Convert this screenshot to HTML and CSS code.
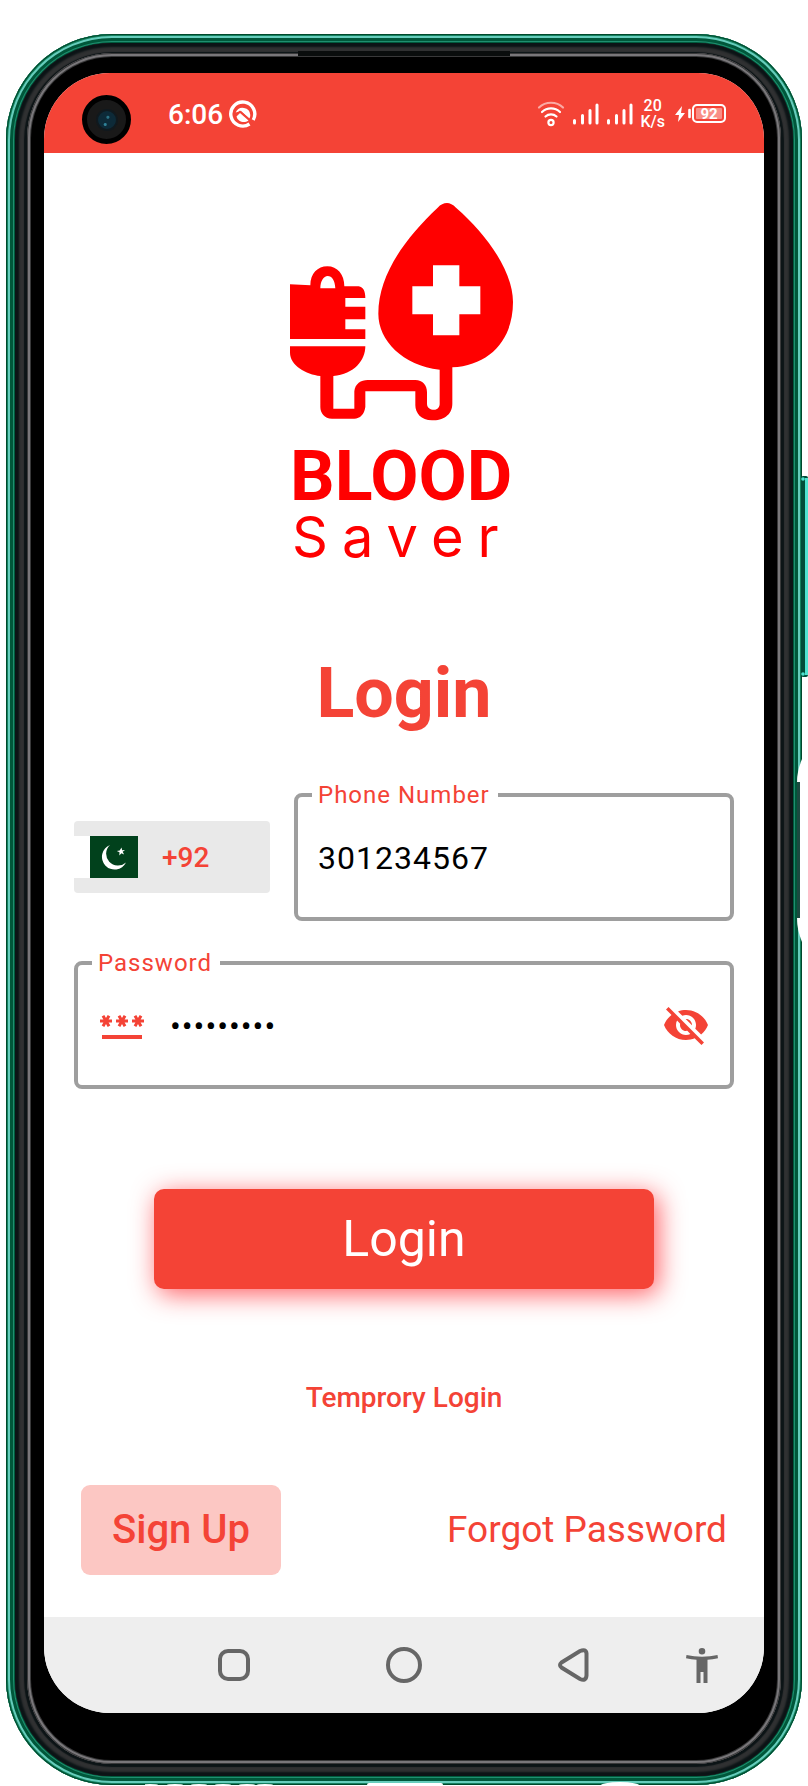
FILE: index.html
```html
<!DOCTYPE html>
<html lang="en">
<head>
<meta charset="utf-8">
<meta name="viewport" content="width=device-width, initial-scale=1">
<title>Blood Saver - Login</title>
<link rel="stylesheet" href="styles.css">
</head>
<body>
<div class="stage">
  <div class="phone">
    <div class="rim">
      <div class="edge">
        <div class="glass">
          <div class="screen">
            <header class="status">
              <span class="camera"><span class="lens"></span></span>
              <div class="status-left">
                <span class="clock">6:06</span>
                <svg class="app-icon" viewBox="0 0 28 28" aria-hidden="true">
                  <path d="M24.200 20A12 12 0 1 0 20.500 24" fill="none" stroke="#fff" stroke-width="3.400"/>
                  <path d="M6.700 12.500a7.600 7.600 0 0 1 14.600 2.500q0 2-1 3.500L12 11z" fill="#fff"/>
                  <path d="M7.500 16.500l3.500-3.500 8.500 7.500a7.600 7.600 0 0 1-12-4z" fill="#fff"/>
                  <path d="M6 16l5-4.500 10 8.500" fill="none" stroke="#f44336" stroke-width="1.600"/>
                </svg>
              </div>
              <div class="status-right">
                <svg class="wifi" viewBox="0 0 28 26" aria-hidden="true">
                  <g fill="none" stroke="#fff" stroke-width="2.200" stroke-linecap="round">
                    <path d="M2 6.500a17.500 17.500 0 0 1 24 0" opacity=".55"/>
                    <path d="M5 11a13 13 0 0 1 18 0"/>
                    <path d="M8.500 15.500a8 8 0 0 1 11 0"/>
                    <circle cx="14" cy="21.500" r="2.600"/>
                  </g>
                </svg>
                <svg class="signal" viewBox="0 0 26 22" aria-hidden="true"><path d="M2 17.500v2.500M10 12.500v7.500M17.500 7.500v12.500M24.500 2v18" stroke="#fff" stroke-width="3" stroke-linecap="round"/></svg>
                <svg class="signal" viewBox="0 0 26 22" aria-hidden="true"><path d="M2 17.500v2.500M10 12.500v7.500M17.500 7.500v12.500M24.500 2v18" stroke="#fff" stroke-width="3" stroke-linecap="round"/></svg>
                <span class="speed">20<br>K/s</span>
                <svg class="bolt" viewBox="0 0 16 18" aria-hidden="true"><path d="M7 1L0 10h4l-1 7 7-9H6z" fill="#fff"/><path d="M14.500 5v7" stroke="#fff" stroke-width="2.600" stroke-linecap="round"/></svg>
                <span class="battery">92</span>
              </div>
            </header>

            <main class="content">
              <div class="brand">
                <svg class="brand-mark" viewBox="62 38 672 654" role="img" aria-label="Blood bag and drop">
                  <g fill="#f00" fill-rule="evenodd">
                    <path d="M533 38Q546 38 560 52C650 130 730 240 731 335C731 450 660 525 549 531V640C549 675 520 690 488 690C455 690 438 668 438 645V603H288V650C285 672 272 685 255 685H188C165 685 153 668 153 650V557C110 552 62 525 62 487V468H288C288 510 255 552 192 557V655H255V603C257 580 275 569 295 569H438C460 569 473 585 473 605V640C473 652 483 658 494 658C505 658 511 650 511 640V538C400 525 327 450 327 370C327 260 400 150 505 52Q518 38 533 38ZM491 225V288H429V372H491V435H570V372H633V288H570V225Z"/>
                    <path d="M62 282L123 285C123 250 145 228 174 228C204 228 225 252 225 288H268C282 290 288 303 288 323H228V349H288V387H228V417H288V446H62ZM153 294H198C197 270 188 257 175 257C163 257 153 272 153 294Z"/>
                  </g>
                </svg>
                <span class="brand-blood">BLOOD</span>
                <span class="brand-saver">Saver</span>
              </div>

              <h1 class="title">Login</h1>

              <form class="form">
                <div class="phone-row">
                  <button type="button" class="country" aria-label="Country code +92">
                    <svg class="flag" viewBox="0 0 48 42" aria-hidden="true">
                      <rect width="48" height="42" fill="#01411c"/>
                      <path d="M20 9A12.700 12.700 0 1 0 36 26.500A11.500 11.500 0 1 1 20 9Z" fill="#fff"/>
                      <path d="M31.500 11.500l.6 2.700 2.900-.2-2.300 1.800 1.400 2.700-2.700-1.200-2.100 2.200.2-3.200-2.700-1.200 2.900-.6z" fill="#fff"/>
                    </svg>
                    <span class="code">+92</span>
                  </button>
                  <div class="field">
                    <label class="field-label" for="phone">Phone Number</label>
                    <input class="field-input" id="phone" type="tel" value="301234567">
                  </div>
                </div>
                <div class="field">
                  <label class="field-label" for="password">Password</label>
                  <svg class="icon" viewBox="0 0 24 24" aria-hidden="true"><path fill="#f44336" d="M2 17h20v2H2v-2zm1.150-4.050L4 11.470l.85 1.480 1.300-.75-.85-1.480H7v-1.500H5.300l.85-1.470L4.850 7 4 8.470 3.150 7l-1.300.75.85 1.470H1v1.500h1.700l-.85 1.480 1.300.75zm6.700-.75l1.300.75.85-1.480.85 1.480 1.300-.75-.85-1.480H15v-1.500h-1.700l.85-1.470-1.300-.75L12 8.470 11.150 7l-1.300.75.85 1.470H9v1.500h1.700l-.85 1.480zM23 9.220h-1.700l.85-1.470-1.300-.75L20 8.470 19.150 7l-1.300.75.85 1.470H17v1.500h1.700l-.85 1.480 1.300.75.85-1.480.85 1.480 1.300-.75-.85-1.480H23v-1.500z"/></svg>
                  <input class="field-input" id="password" type="password" value="abcd12345">
                  <button type="button" class="icon-button" aria-label="Show password">
                    <svg class="icon" viewBox="0 0 24 24" aria-hidden="true"><path fill="#f44336" d="M12 7c2.760 0 5 2.240 5 5 0 .65-.13 1.260-.36 1.830l2.920 2.920c1.510-1.260 2.700-2.890 3.430-4.750-1.730-4.390-6-7.500-11-7.500-1.400 0-2.740.25-3.980.7l2.160 2.160C10.740 7.130 11.350 7 12 7zM2 4.270l2.280 2.280.46.46C3.080 8.300 1.780 10.020 1 12c1.730 4.390 6 7.500 11 7.500 1.550 0 3.030-.3 4.380-.84l.42.42L19.730 22 21 20.730 3.270 3 2 4.270zM7.530 9.800l1.550 1.550c-.05.21-.08.43-.08.65 0 1.660 1.340 3 3 3 .22 0 .44-.03.65-.08l1.550 1.550c-.67.33-1.410.53-2.200.53-2.760 0-5-2.240-5-5 0-.79.2-1.530.53-2.200zm4.310-.78l3.150 3.150.02-.16c0-1.660-1.340-3-3-3l-.17.01z"/></svg>
                  </button>
                </div>
                <button type="submit" class="submit">Login</button>
              </form>

              <a class="temp-link" href="#">Temprory Login</a>

              <div class="actions">
                <a class="signup" href="#">Sign Up</a>
                <a class="forgot" href="#">Forgot Password</a>
              </div>
            </main>

            <nav class="navbar">
              <div class="nav-main">
                <button type="button" class="nav-button" aria-label="Recent apps"><svg class="nav-icon" viewBox="0 0 36 36"><rect x="4" y="4" width="28" height="28" rx="8" fill="none" stroke="#666" stroke-width="4"/></svg></button>
                <button type="button" class="nav-button" aria-label="Home"><svg class="nav-icon" viewBox="0 0 36 36"><circle cx="18" cy="18" r="16" fill="none" stroke="#666" stroke-width="4"/></svg></button>
                <button type="button" class="nav-button" aria-label="Back"><svg class="nav-icon" viewBox="0 0 36 36"><path d="M5.500 15.500L24 4Q30 1.500 30.500 6.500V28.500Q30 34.500 24 32L5.500 20.500Q2.500 18 5.500 15.500Z" fill="none" stroke="#666" stroke-width="4"/></svg></button>
              </div>
              <button type="button" class="nav-button nav-access" aria-label="Accessibility"><svg class="nav-icon" viewBox="0 0 36 36"><path d="M18 1a3.300 3.300 0 1 1 0 6.600 3.300 3.300 0 0 1 0-6.600zM33.500 8l.5 3.300q-5.500 1.200-10.500 1.400V36h-4V25h-3v11h-4V12.700q-5-.2-10.500-1.400l.5-3.300q7.500 1.700 15.500 1.700T33.500 8z" fill="#666"/></svg></button>
            </nav>
          </div>
        </div>
      </div>
    </div>
    <span class="speaker"></span>
    <svg class="side-keys" viewBox="0 0 12 474" aria-hidden="true">
      <rect x="5" y="6" width="7" height="201" rx="2" fill="#004d38"/>
      <rect x="9" y="8" width="3" height="197" fill="#4fe3d0"/>
      <circle cx="7" cy="9" r="1.800" fill="#4fe3d0"/><circle cx="7" cy="204" r="1.800" fill="#4fe3d0"/>
      <path d="M12 289H6Q1 301 1 312V448Q1 460 6 472H12Z" fill="#fff"/>
      <rect x="1" y="312" width="3" height="136" fill="#1b4a40"/>
    </svg>
    <svg class="ports" viewBox="0 0 500 3" aria-hidden="true">
      <g fill="#fff"><ellipse cx="5" cy="3" rx="8" ry="1"/><ellipse cx="30" cy="3" rx="8" ry="1"/><ellipse cx="54" cy="3" rx="8" ry="1"/><ellipse cx="78" cy="3" rx="8" ry="1"/><ellipse cx="102" cy="3" rx="8" ry="1"/><ellipse cx="120" cy="3" rx="8" ry="1"/><rect x="222" y="1" width="76" height="4" rx="2"/><ellipse cx="475" cy="4" rx="20" ry="4"/></g>
    </svg>
  </div>
</div>
</body>
</html>
```
FILE: styles.css
```css
* { box-sizing: border-box; }

body {
  margin: 0;
  background: #fff;
  color: #f44336;
  font-family: Roboto, "Liberation Sans", sans-serif;
}

button, input { font: inherit; color: inherit; }
button { margin: 0; padding: 0; border: 0; background: none; }
a { color: inherit; text-decoration: none; }
svg { display: block; }

/* Handset body, drawn as nested rings */
.stage { padding: 34px 6px 1px; }

.phone {
  position: relative;
  padding: 9px;
  border-radius: 106px;
  background: #005a3c;
  box-shadow:
    inset 0 0 0 1px #00482b,
    inset 0 0 0 2px #14805e,
    inset 0 0 0 4px #66cdbc,
    inset 0 0 0 7px #00573a,
    inset 0 0 0 8px #1f8f70;
}

.rim {
  padding: 10px 12px 12px;
  border-radius: 97px;
  background: #0c1416;
  box-shadow: inset 0 0 2px 4px #0c1416, inset 0 0 1px 9px #303132;
}

.edge {
  padding: 4px;
  border-radius: 85px;
  background: #39393a;
  box-shadow: inset 0 0 0 1px #39393a, inset 0 0 0 3px #79777a;
}

.glass {
  padding: 16px 13px 47px;
  border-radius: 81px;
  background: #000;
}

.screen {
  overflow: hidden;
  border-radius: 66px;
  background: #fff;
}

.speaker {
  position: absolute;
  top: 17px;
  left: 50%;
  width: 212px;
  height: 5px;
  margin-left: -106px;
  background: #0a0d0d;
}

.side-keys {
  position: absolute;
  top: 436px;
  right: -6px;
  width: 12px;
  height: 474px;
}

.ports {
  position: absolute;
  bottom: 0;
  left: 139px;
  width: 500px;
  height: 3px;
}

/* Status bar */
.status {
  position: relative;
  display: flex;
  align-items: center;
  justify-content: space-between;
  height: 80px;
  padding: 1px 38px 0 124px;
  background: #f44336;
  color: #fff;
}

.camera {
  position: absolute;
  top: 22px;
  left: 38px;
  display: grid;
  place-items: center;
  width: 49px;
  height: 49px;
  border: 5px solid #000;
  border-radius: 50%;
  background: #191919;
}

.lens {
  width: 22px;
  height: 22px;
  border: 2px solid #10191e;
  border-radius: 50%;
  background: radial-gradient(circle at 55% 35%, #2a7285 0 1px, transparent 2px),
    radial-gradient(circle at 40% 75%, #2f8298 0 1px, transparent 2px), #0d2a38;
}

.status-left, .status-right { display: flex; align-items: center; }
.status-left { gap: 6px; }
.clock { padding-top: 2px; font-size: 28px; font-weight: 500; line-height: 32px; }
.app-icon { width: 28px; height: 28px; }
.status-right { gap: 7px; }
.wifi { width: 28px; height: 26px; }
.signal { width: 27px; height: 22px; }
.speed { font-size: 16px; font-weight: 500; line-height: 16px; text-align: center; }
.bolt { width: 16px; height: 18px; margin-left: 3px; }

.battery {
  width: 34px;
  height: 19px;
  margin-left: -6px;
  border: 2px solid #fff;
  border-radius: 5px;
  background: #f98e86;
  box-shadow: inset 0 0 0 2px #f44336;
  font-size: 15px;
  font-weight: 700;
  line-height: 16px;
  text-align: center;
}

/* Login page */
.content {
  display: flex;
  flex-direction: column;
  padding: 50px 30px 42px;
}

.brand {
  display: flex;
  flex-direction: column;
  align-self: center;
  width: 228px;
  color: #f00;
}

.brand-mark { width: 224px; height: 218px; }

.brand-blood {
  margin-top: 22px;
  font-size: 70px;
  font-weight: 700;
  line-height: 66px;
  white-space: nowrap;
}

.brand-saver {
  padding-left: 2px;
  font-family: Inter, Roboto, sans-serif;
  font-size: 56px;
  font-weight: 400;
  line-height: 56px;
  letter-spacing: 14px;
  white-space: nowrap;
}

.title {
  margin: 88px 0 60px;
  font-size: 70px;
  font-weight: 700;
  line-height: 80px;
  text-align: center;
}

.form { display: flex; flex-direction: column; gap: 40px; }
.phone-row { display: flex; align-items: center; gap: 24px; }

.country {
  display: flex;
  align-items: center;
  gap: 24px;
  flex: 0 0 196px;
  height: 72px;
  border-radius: 4px;
  background: #e9e9e9;
}

.flag { width: 64px; height: 42px; padding-left: 16px; background: #fff; }
.code { font-size: 28px; font-weight: 500; }

.field {
  position: relative;
  display: flex;
  flex: 1;
  align-items: center;
  gap: 24px;
  min-width: 0;
  min-height: 128px;
  padding: 0 20px;
  border: 4px solid #9e9e9e;
  border-radius: 8px;
}

.field-label {
  position: absolute;
  top: -16px;
  left: 14px;
  padding: 0 8px 0 6px;
  background: #fff;
  font-size: 24px;
  line-height: 28px;
  letter-spacing: 1px;
}

.field-input {
  flex: 1;
  min-width: 0;
  padding: 2px 0 0;
  border: 0;
  outline: 0;
  background: none;
  color: #000;
  font-size: 32px;
  line-height: 40px;
  letter-spacing: 1px;
}

.icon { flex: none; width: 48px; height: 48px; }

.submit {
  align-self: center;
  width: 500px;
  max-width: 100%;
  height: 100px;
  margin-top: 60px;
  border-radius: 10px;
  background: #f44336;
  box-shadow: 4px 5px 26px rgba(255, 23, 30, 0.7);
  color: #fff;
  font-size: 50px;
}

.temp-link {
  align-self: center;
  margin-top: 93px;
  font-size: 28px;
  font-weight: 500;
  line-height: 32px;
}

.actions {
  display: flex;
  align-items: center;
  justify-content: space-between;
  margin-top: 71px;
  padding: 0 7px;
}

.signup {
  padding: 0 31px;
  border-radius: 9px;
  background: #fcc7c3;
  font-size: 40px;
  font-weight: 500;
  line-height: 90px;
}

.forgot { font-size: 37px; line-height: 40px; }

/* System navigation */
.navbar {
  display: grid;
  grid-template-columns: 1fr auto 1fr;
  align-items: center;
  height: 96px;
  background: #eee;
}

.nav-main { display: flex; grid-column: 2; gap: 122px; }
.nav-button { display: grid; place-items: center; width: 48px; height: 48px; }
.nav-access { grid-column: 3; justify-self: end; margin-right: 38px; }
.nav-icon { width: 36px; height: 36px; }
```
